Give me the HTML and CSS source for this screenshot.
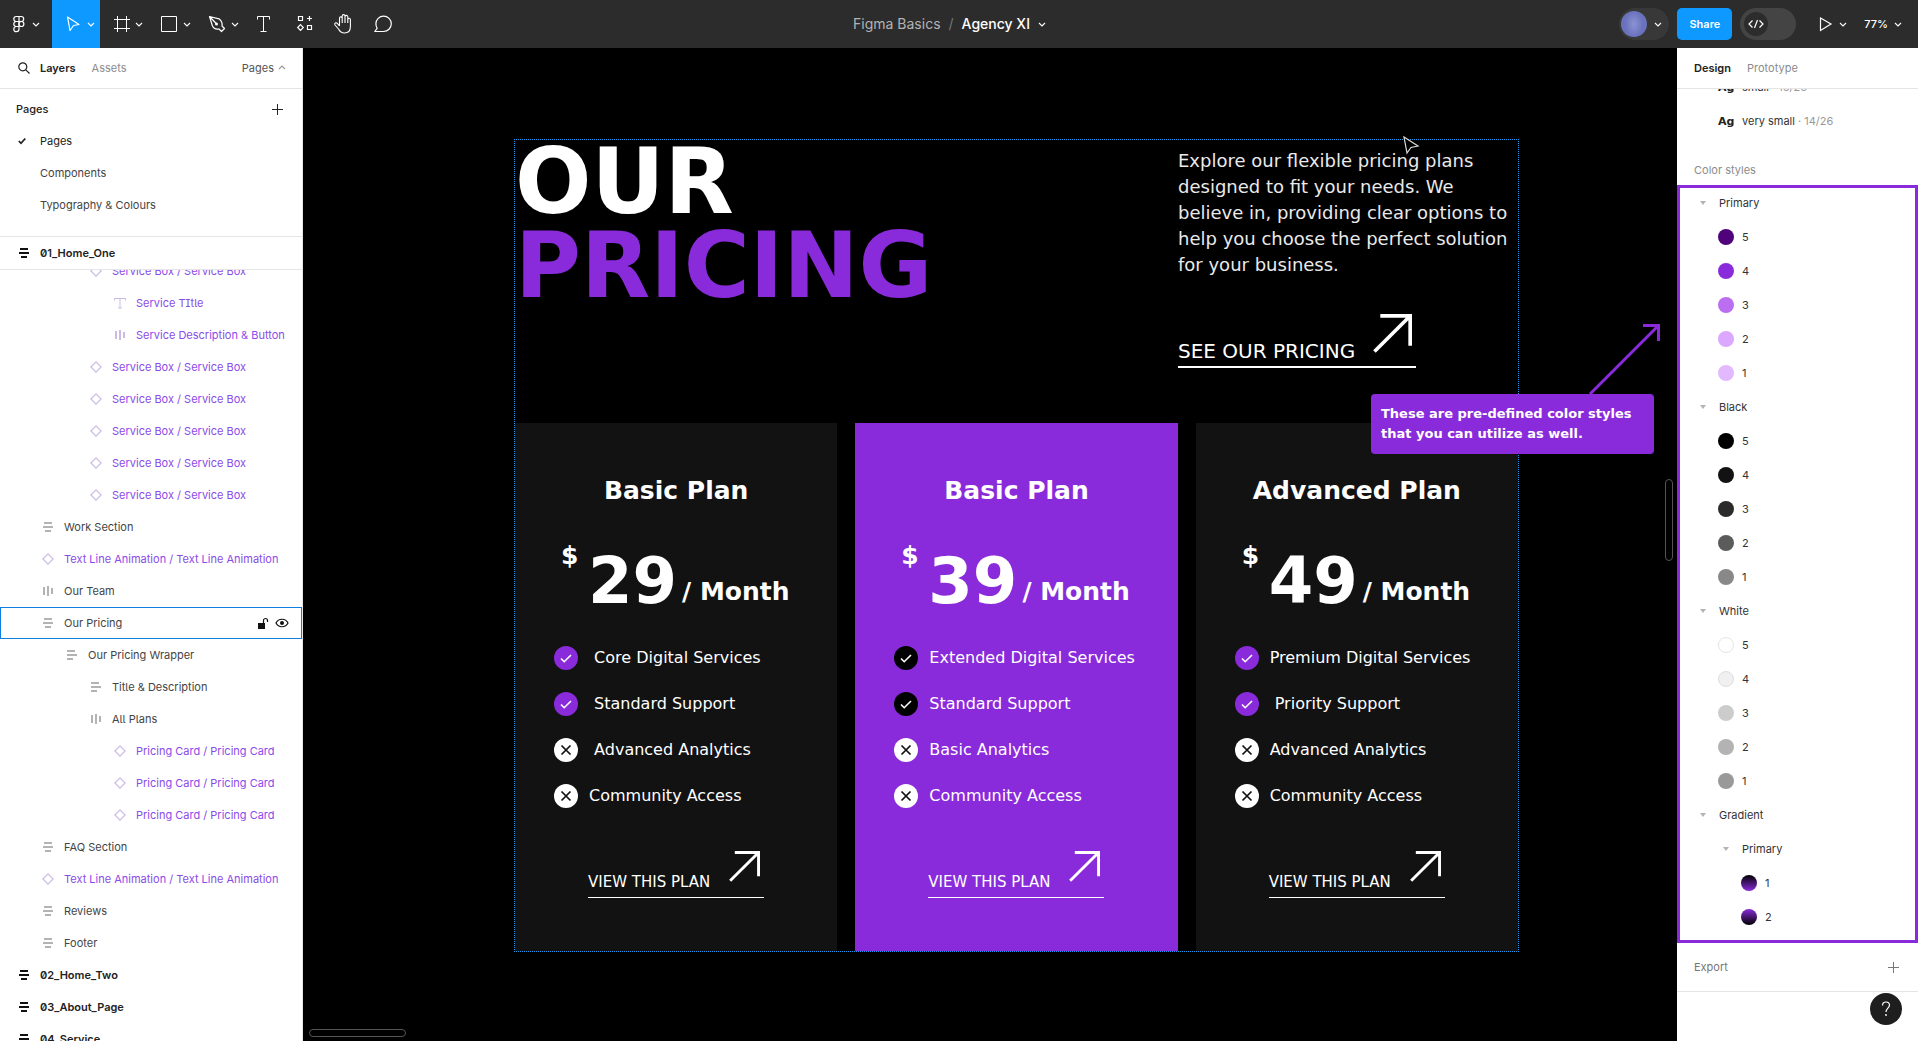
FILE: index.html
```html
<!DOCTYPE html>
<html lang="en">
<head>
<meta charset="utf-8">
<meta name="viewport" content="width=device-width, initial-scale=1">
<title>Agency XI</title>
<link rel="stylesheet" href="styles.css">
</head>
<body>
<svg class="sprite" aria-hidden="true">
  <symbol id="chev" viewBox="0 0 10 10"><path d="M2 4l3 3 3-3" fill="none" stroke="currentColor" stroke-width="1.1"/></symbol>
  <symbol id="plus" viewBox="0 0 12 12"><path d="M6.5 1v11M1 6.5h11" fill="none" stroke="currentColor"/></symbol>
  <symbol id="l-mid" viewBox="0 0 12 12"><path d="M2 2h8M1 6h10M3 10h6" fill="none" stroke="currentColor" stroke-width="2"/></symbol>
  <symbol id="l-left" viewBox="0 0 12 12"><path d="M1 2h8M1 6h10M1 10h6" fill="none" stroke="currentColor" stroke-width="2"/></symbol>
  <symbol id="l-cols" viewBox="0 0 12 12"><path d="M2 2v8M6 1v10M10 3v6" fill="none" stroke="currentColor" stroke-width="2"/></symbol>
  <symbol id="l-dia" viewBox="0 0 12 12"><path d="M6 .9L11.1 6 6 11.1.9 6z" fill="none" stroke="currentColor" stroke-width="1.2"/></symbol>
  <symbol id="l-text" viewBox="0 0 12 12"><path d="M.5 3.500V1.500h11v2M6 1.500v9.500M4 11h4" fill="none" stroke="currentColor"/></symbol>
  <symbol id="caret" viewBox="0 0 6 4"><path d="M0 0h6L3 4z" fill="currentColor"/></symbol>
  <symbol id="yes" viewBox="0 0 24 24"><circle cx="12" cy="12" r="12" fill="currentColor"/><path d="M7 12.500l3.200 3.200L17 9" fill="none" stroke="#fff" stroke-width="1.600"/></symbol>
  <symbol id="no" viewBox="0 0 24 24"><circle cx="12" cy="12" r="12" fill="#fff"/><path d="M7.500 7.500l9 9M16.500 7.500l-9 9" fill="none" stroke="#111" stroke-width="1.700"/></symbol>
  <symbol id="arrow" viewBox="0 0 32 32"><path d="M6 1.500h24.500V26M30 2L1.200 30.800" fill="none" stroke="currentColor" stroke-width="3"/></symbol>
</svg>

<header class="toolbar">
  <div class="tools">
    <button class="tool main" aria-label="Main menu"><svg class="i24" viewBox="0 0 24 24"><g fill="none" stroke="currentColor" stroke-width="1.200"><path d="M12 4.500H9.300a2.500 2.500 0 0 0 0 5H12zM12 4.500h2.200a2.500 2.500 0 0 1 0 5H12zM12 9.500H9.300a2.500 2.500 0 0 0 0 5H12zM12 14.500H9.300a2.600 2.600 0 1 0 2.700 2.600z"/><circle cx="14.400" cy="12" r="2.500"/></g></svg><svg class="i10"><use href="#chev"/></svg></button>
    <button class="tool active" aria-label="Move"><svg class="i24" viewBox="0 0 24 24"><path d="M5.500 5l11.500 7.500-5.500 1L8 18.500z" fill="none" stroke="currentColor" stroke-width="1.200" stroke-linejoin="round"/></svg><svg class="i10"><use href="#chev"/></svg></button>
    <button class="tool" aria-label="Frame"><svg class="i24" viewBox="0 0 24 24"><path d="M7.500 4v16M16.500 4v16M4 7.500h16M4 16.500h16" fill="none" stroke="currentColor"/></svg><svg class="i10"><use href="#chev"/></svg></button>
    <button class="tool" aria-label="Rectangle"><svg class="i24" viewBox="0 0 24 24"><path d="M3.500 4.500h15v15h-15z" fill="none" stroke="currentColor"/></svg><svg class="i10"><use href="#chev"/></svg></button>
    <button class="tool" aria-label="Pen"><svg class="i24" viewBox="0 0 24 24"><path d="M3.500 4.500l9.500 2.300c2.500 2 3.500 5 3 7.200l2.500 2.500-3 3-2.500-2.500c-3 .5-5.700-1-6.700-3.500zM3.500 4.500l6.700 7" fill="none" stroke="currentColor" stroke-width="1.200" stroke-linejoin="round"/><circle cx="10.500" cy="12" r="1.500" fill="currentColor"/></svg><svg class="i10"><use href="#chev"/></svg></button>
    <button class="tool single" aria-label="Text"><svg class="i24" viewBox="0 0 24 24"><path d="M5.500 7.500v-3h12v3M11.500 4.500v15M8.500 19.500h6" fill="none" stroke="currentColor"/></svg></button>
    <button class="tool single" aria-label="Resources"><svg class="i24" viewBox="0 0 24 24"><path d="M6.500 4.500h4v4h-4zM15.500 13.500h4v4h-4zM17.500 4v5M15 6.500h5M8.500 12.700l2.800 2.800-2.800 2.800-2.800-2.800z" fill="none" stroke="currentColor" stroke-width="1.200"/></svg></button>
    <button class="tool single" aria-label="Hand"><svg class="i24" viewBox="0 0 24 24"><path d="M7.500 14V6.200a1.300 1.300 0 0 1 2.700 0V11M10.200 11V4a1.400 1.400 0 0 1 2.800 0v7M13 11V4.800a1.400 1.400 0 0 1 2.800 0V11M15.800 11V7.500a1.300 1.300 0 0 1 2.600 0v7c0 4-2.200 6.500-5.900 6.500-3 0-4.500-1-6-4L3 13c-1-1.800 1-3 2.300-1.600L7.500 14" fill="none" stroke="currentColor" stroke-width="1.100" stroke-linejoin="round"/></svg></button>
    <button class="tool single" aria-label="Comment"><svg class="i24" viewBox="0 0 24 24"><path d="M2.800 19.500h8.800a7.700 7.700 0 1 0-7.700-7.700c0 1.700.5 3.200 1.200 4.500z" fill="none" stroke="currentColor" stroke-width="1.200" stroke-linejoin="round"/></svg></button>
  </div>
  <div class="crumbs"><a href="#">Figma Basics</a><span class="slash">/</span><button class="file">Agency XI<svg class="i10"><use href="#chev"/></svg></button></div>
  <div class="actions">
    <button class="user" aria-label="Account"><span class="avatar"></span><svg class="i10"><use href="#chev"/></svg></button>
    <button class="share">Share</button>
    <label class="devmode"><input type="checkbox" aria-label="Dev mode"><span class="knob"><svg class="i16" viewBox="0 0 16 16"><path d="M4.500 4.500L1 8l3.500 3.500M11.500 4.500L15 8l-3.500 3.500M9.500 4l-3 8" fill="none" stroke="currentColor" stroke-width="1.200"/></svg></span></label>
    <button class="play" aria-label="Present"><svg class="i16" viewBox="0 0 16 16"><path d="M2.500 2L13 8 2.500 14.500z" fill="none" stroke="currentColor" stroke-width="1.200"/></svg><svg class="i10"><use href="#chev"/></svg></button>
    <button class="zoom">77%<svg class="i10"><use href="#chev"/></svg></button>
  </div>
</header>

<div class="workspace">
  <aside class="left">
    <div class="tabs">
      <button class="find" aria-label="Search"><svg class="i12" viewBox="0 0 12 12"><circle cx="4.800" cy="4.800" r="4" fill="none" stroke="currentColor" stroke-width="1.200"/><path d="M7.800 7.800l3.700 3.700" stroke="currentColor" stroke-width="1.200"/></svg></button>
      <button class="tab on">Layers</button><button class="tab">Assets</button>
      <button class="pages-toggle">Pages<svg class="i10 up"><use href="#chev"/></svg></button>
    </div>
    <section class="pages">
      <div class="pages-head"><h2>Pages</h2><button aria-label="Add page"><svg class="i12"><use href="#plus"/></svg></button></div>
      <ul>
        <li class="on"><svg class="tick" viewBox="0 0 8 8"><path d="M.8 4l2.200 2.300L7.300 1.500" fill="none" stroke="currentColor" stroke-width="1.800"/></svg>Pages</li>
        <li>Components</li>
        <li>Typography &amp; Colours</li>
      </ul>
    </section>
    <div class="layer frame-name pinned"><svg><use href="#l-mid"/></svg>01_Home_One</div>
    <div class="layers"><ul>
      <li class="layer d3 comp"><svg><use href="#l-dia"/></svg>Service Box / Service Box</li>
      <li class="layer d4 comp"><svg><use href="#l-text"/></svg>Service TItle</li>
      <li class="layer d4 comp"><svg><use href="#l-cols"/></svg>Service Description &amp; Button</li>
      <li class="layer d3 comp"><svg><use href="#l-dia"/></svg>Service Box / Service Box</li>
      <li class="layer d3 comp"><svg><use href="#l-dia"/></svg>Service Box / Service Box</li>
      <li class="layer d3 comp"><svg><use href="#l-dia"/></svg>Service Box / Service Box</li>
      <li class="layer d3 comp"><svg><use href="#l-dia"/></svg>Service Box / Service Box</li>
      <li class="layer d3 comp"><svg><use href="#l-dia"/></svg>Service Box / Service Box</li>
      <li class="layer d1"><svg><use href="#l-mid"/></svg>Work Section</li>
      <li class="layer d1 comp"><svg><use href="#l-dia"/></svg>Text Line Animation / Text Line Animation</li>
      <li class="layer d1"><svg><use href="#l-cols"/></svg>Our Team</li>
      <li class="layer d1 hover"><svg><use href="#l-mid"/></svg>Our Pricing
        <span class="row-tools">
          <button aria-label="Lock"><svg viewBox="0 0 12 12"><path d="M1 6h7v6H1z" fill="currentColor"/><path d="M6.500 6V3.500a2 2 0 0 1 4 0V5" fill="none" stroke="currentColor" stroke-width="1.200"/></svg></button>
          <button aria-label="Hide"><svg class="eye" viewBox="0 0 14 12"><path d="M1 6c2.500-5 9.500-5 12 0-2.500 5-9.500 5-12 0z" fill="none" stroke="currentColor" stroke-width="1.200"/><circle cx="7" cy="6" r="2" fill="currentColor"/></svg></button>
        </span></li>
      <li class="layer d2"><svg><use href="#l-left"/></svg>Our Pricing Wrapper</li>
      <li class="layer d3"><svg><use href="#l-left"/></svg>Title &amp; Description</li>
      <li class="layer d3"><svg><use href="#l-cols"/></svg>All Plans</li>
      <li class="layer d4 comp"><svg><use href="#l-dia"/></svg>Pricing Card / Pricing Card</li>
      <li class="layer d4 comp"><svg><use href="#l-dia"/></svg>Pricing Card / Pricing Card</li>
      <li class="layer d4 comp"><svg><use href="#l-dia"/></svg>Pricing Card / Pricing Card</li>
      <li class="layer d1"><svg><use href="#l-mid"/></svg>FAQ Section</li>
      <li class="layer d1 comp"><svg><use href="#l-dia"/></svg>Text Line Animation / Text Line Animation</li>
      <li class="layer d1"><svg><use href="#l-mid"/></svg>Reviews</li>
      <li class="layer d1"><svg><use href="#l-mid"/></svg>Footer</li>
      <li class="layer frame-name"><svg><use href="#l-mid"/></svg>02_Home_Two</li>
      <li class="layer frame-name"><svg><use href="#l-mid"/></svg>03_About_Page</li>
      <li class="layer frame-name"><svg><use href="#l-mid"/></svg>04_Service</li>
    </ul></div>
  </aside>

  <main class="canvas">
    <div class="artboard">
      <div class="intro">
        <h1>OUR<br><span>PRICING</span></h1>
        <div class="about">
          <p>Explore our flexible pricing plans<br>designed to fit your needs. We<br>believe in, providing clear options to<br>help you choose the perfect solution<br>for your business.</p>
          <a class="cta big" href="#">SEE OUR PRICING<svg><use href="#arrow"/></svg></a>
        </div>
      </div>
      <div class="plans">
        <article class="plan">
          <h2>Basic Plan</h2>
          <div class="price"><span class="cur">$</span><span class="num">29</span><span class="per">/ Month</span></div>
          <ul>
            <li><svg><use href="#yes"/></svg>&nbsp;Core Digital Services</li>
            <li><svg><use href="#yes"/></svg>&nbsp;Standard Support</li>
            <li><svg><use href="#no"/></svg>&nbsp;Advanced Analytics</li>
            <li><svg><use href="#no"/></svg>Community Access</li>
          </ul>
          <a class="cta" href="#">VIEW THIS PLAN<svg><use href="#arrow"/></svg></a>
        </article>
        <article class="plan featured">
          <h2>Basic Plan</h2>
          <div class="price"><span class="cur">$</span><span class="num">39</span><span class="per">/ Month</span></div>
          <ul>
            <li><svg><use href="#yes"/></svg>Extended Digital Services</li>
            <li><svg><use href="#yes"/></svg>Standard Support</li>
            <li><svg><use href="#no"/></svg>Basic Analytics</li>
            <li><svg><use href="#no"/></svg>Community Access</li>
          </ul>
          <a class="cta" href="#">VIEW THIS PLAN<svg><use href="#arrow"/></svg></a>
        </article>
        <article class="plan">
          <h2>Advanced Plan</h2>
          <div class="price"><span class="cur">$</span><span class="num">49</span><span class="per">/ Month</span></div>
          <ul>
            <li><svg><use href="#yes"/></svg>Premium Digital Services</li>
            <li><svg><use href="#yes"/></svg>&nbsp;Priority Support</li>
            <li><svg><use href="#no"/></svg>Advanced Analytics</li>
            <li><svg><use href="#no"/></svg>Community Access</li>
          </ul>
          <a class="cta" href="#">VIEW THIS PLAN<svg><use href="#arrow"/></svg></a>
        </article>
      </div>
    </div>
    <svg class="pointer" viewBox="0 0 18 20"><path d="M2 2l14 9-7 1.500L5 18z" fill="#000" stroke="#ddd" stroke-width="1.200"/></svg>
    <svg class="note-arrow" viewBox="0 0 72 72"><path d="M54 2.500h15.500V18M69 3L1 71" fill="none" stroke="currentColor" stroke-width="3"/></svg>
    <p class="note">These are pre-defined color styles<br>that you can utilize as well.</p>
    <span class="bar-x"></span><span class="bar-y"></span>
  </main>

  <aside class="right">
    <div class="tabs"><button class="tab on">Design</button><button class="tab">Prototype</button></div>
    <div class="props">
      <ul class="texts">
        <li><b>Ag</b>small <span>· 16/26</span></li>
        <li><b>Ag</b>very small <span>· 14/26</span></li>
      </ul>
      <h3>Color styles</h3>
      <ul class="colors">
        <li class="group"><svg><use href="#caret"/></svg>Primary</li>
        <li><i class="p5"></i>5</li><li><i class="p4"></i>4</li><li><i class="p3"></i>3</li><li><i class="p2"></i>2</li><li><i class="p1"></i>1</li>
        <li class="group"><svg><use href="#caret"/></svg>Black</li>
        <li><i class="b5"></i>5</li><li><i class="b4"></i>4</li><li><i class="b3"></i>3</li><li><i class="b2"></i>2</li><li><i class="b1"></i>1</li>
        <li class="group"><svg><use href="#caret"/></svg>White</li>
        <li><i class="w5"></i>5</li><li><i class="w4"></i>4</li><li><i class="w3"></i>3</li><li><i class="w2"></i>2</li><li><i class="w1"></i>1</li>
        <li class="group"><svg><use href="#caret"/></svg>Gradient</li>
        <li class="group sub"><svg><use href="#caret"/></svg>Primary</li>
        <li class="sub"><i class="g1"></i>1</li><li class="sub"><i class="g2"></i>2</li>
      </ul>
      <div class="export"><span>Export</span><button aria-label="Add export"><svg class="i12"><use href="#plus"/></svg></button></div>
    </div>
    <button class="help" aria-label="Help"><svg viewBox="0 0 16 20"><path d="M4.500 6.500C4.500 4 6 3 8 3s3.500 1.200 3.500 3.300C11.500 9 8 9.500 8 13" fill="none" stroke="currentColor" stroke-width="1.200"/><circle cx="8" cy="16" r="0.900" fill="currentColor"/></svg></button>
  </aside>
</div>
</body>
</html>
```
FILE: styles.css
```css
* { box-sizing: border-box; }
html, body { height: 100%; margin: 0; }
body {
  display: flex;
  flex-direction: column;
  overflow: hidden;
  background: #fff;
  color: #333;
  font: 11px/16px Inter, "Liberation Sans", sans-serif;
}
h1, h2, h3, p, ul { margin: 0; padding: 0; font-size: inherit; }
ul { list-style: none; }
a { color: inherit; text-decoration: none; }
button { border: 0; padding: 0; background: none; color: inherit; font: inherit; display: flex; align-items: center; }
svg { display: block; flex: none; }
.sprite { position: absolute; width: 0; height: 0; }
.i24 { width: 24px; height: 24px; }
.i16 { width: 16px; height: 16px; }
.i12 { width: 12px; height: 12px; }
.i10 { width: 10px; height: 10px; }

/* Toolbar */
.toolbar {
  flex: none;
  display: grid;
  grid-template-columns: 1fr auto 1fr;
  align-items: center;
  height: 48px;
  background: #2c2c2c;
  color: #fff;
}
.tools { display: flex; }
.tool { width: 48px; height: 48px; padding-left: 10px; }
.tool.main { width: 52px; padding-left: 7px; }
.tool.single { width: 40px; padding-left: 8px; }
.tool.active { background: #0d99ff; }
.crumbs { display: flex; align-items: center; gap: 8px; padding-right: 18px; font-size: 14px; color: #b3b3b3; }
.slash { color: #777; }
.file { gap: 7px; color: #fff; font-weight: 500; }
.actions { display: flex; align-items: center; justify-content: flex-end; gap: 8px; padding-right: 15px; font-weight: 600; }
.user { gap: 6px; width: 50px; height: 32px; padding-left: 2px; border-radius: 16px; background: #383838; }
.avatar { width: 26px; height: 26px; border-radius: 50%; background: radial-gradient(ellipse 9px 13px, #8b93d4, #6b72bd); }
.share { height: 32px; padding: 0 12px; border-radius: 5px; background: #0d99ff; }
.devmode { display: flex; align-items: center; width: 56px; height: 32px; padding: 4px; border-radius: 16px; background: #444; }
.devmode input { position: absolute; opacity: 0; }
.knob { display: grid; place-items: center; width: 24px; height: 24px; border-radius: 50%; background: #2c2c2c; }
.play { gap: 4px; padding: 0 8px 0 14px; }
.zoom { gap: 5px; font-weight: 500; }

.workspace { flex: 1; min-height: 0; display: flex; }

/* Side panels */
.left, .right { flex: none; display: flex; flex-direction: column; background: #fff; overflow: hidden; }
.left { width: 303px; border-right: 1px solid #e5e5e5; }
.right { position: relative; width: 241px; }
.tabs { flex: none; display: flex; align-items: center; gap: 16px; height: 41px; padding: 0 15px 0 16px; border-bottom: 1px solid #e5e5e5; color: #8c8c8c; }
.right .tabs { padding-left: 17px; }
.tab.on { color: #222; font-weight: 600; }
.find { width: 8px; padding-left: 2px; color: #222; }
.pages-toggle { margin-left: auto; gap: 3px; color: #555; }
.up { transform: rotate(180deg); color: #999; }
.pages { flex: none; padding: 4px 0 15px; border-bottom: 1px solid #e5e5e5; }
.pages-head { display: flex; align-items: center; justify-content: space-between; height: 32px; padding: 0 19px 0 16px; color: #222; }
.pages-head h2 { font-weight: 500; }
.pages li { display: flex; align-items: center; height: 32px; padding-left: 40px; color: #444; }
.pages li.on { padding-left: 18px; gap: 14px; color: #222; }
.tick { width: 8px; height: 8px; }
.layer { flex: none; display: flex; align-items: center; gap: 10px; height: 32px; padding: 0 13px 0 18px; color: #444; white-space: nowrap; font-feature-settings: "ss02"; }
.layer > svg { width: 12px; height: 12px; color: #b3b3b3; }
.layer.frame-name { color: #222; font-weight: 600; }
.layer.frame-name > svg { color: #111; }
.layer.pinned { height: 33px; border-bottom: 1px solid #e5e5e5; }
.layers { flex: 1; min-height: 0; overflow: hidden; }
.layers ul { margin-top: -15px; }
.layer.d1 { padding-left: 42px; }
.layer.d2 { padding-left: 66px; }
.layer.d3 { padding-left: 90px; }
.layer.d4 { padding-left: 114px; }
.layer.comp { color: #8a4be8; }
.layer.comp > svg { color: #cbbbe4; }
.layer.hover { box-shadow: inset 0 0 0 1px #0d7fe0; }
.row-tools { display: flex; gap: 6px; margin-left: auto; color: #111; }
.row-tools svg { width: 12px; height: 12px; }
.row-tools .eye { width: 14px; }

/* Canvas */
.canvas {
  position: relative;
  flex: 1;
  min-width: 0;
  padding: 91px 158px 0 211px;
  overflow: hidden;
  background: #000;
  color: #fff;
  font-family: "DejaVu Sans", sans-serif;
}
.artboard { border: 1px dotted #1c9cf5; }
.intro { display: flex; justify-content: space-between; height: 283px; }
h1 { font-size: 90px; line-height: 84px; font-weight: 700; }
h1 span { color: #8a2bdb; }
.about { display: flex; flex-direction: column; align-items: flex-start; flex: none; width: 340px; padding-top: 8px; }
.about p { font-size: 18px; line-height: 26px; color: #eaeaea; white-space: nowrap; }
.cta { display: flex; align-items: flex-end; justify-content: space-between; width: 176px; height: 47px; padding: 0 4px 5px 0; border-bottom: 1px solid #fff; font-size: 15px; line-height: 20px; white-space: nowrap; }
.cta svg { align-self: flex-start; width: 31px; height: 31px; }
.cta.big { width: 238px; height: 54px; margin-top: 36px; border-bottom-width: 2px; font-size: 20px; }
.cta.big svg { width: 39px; height: 39px; }
.plans { display: grid; grid-template-columns: repeat(3, 1fr); gap: 18px; }
.plan { padding: 52px 0 53px 39px; background: #121212; }
.plan.featured { background: #8a2bdb; }
.plan h2 { margin: 0 39px 37px 0; font-size: 25px; line-height: 32px; text-align: center; }
.price { display: flex; align-items: flex-end; height: 69px; padding-left: 7px; font-weight: 700; }
.cur { align-self: flex-start; width: 27px; font-size: 25px; line-height: 24px; }
.num { font-size: 64px; line-height: 64px; }
.per { margin-left: 5px; font-size: 25px; line-height: 42px; }
.plan ul { display: grid; gap: 22px; margin: 33px 0 43px; }
.plan li { display: flex; align-items: center; gap: 11px; height: 24px; font-size: 16px; }
.plan li svg { width: 24px; height: 24px; color: #8a2bdb; }
.plan.featured li svg { color: #000; }
.plan .cta { margin-left: 34px; }
.pointer { position: absolute; left: 1099px; top: 87px; width: 18px; height: 20px; }
.note-arrow { position: absolute; right: 16px; top: 275px; width: 72px; height: 72px; color: #8a2bdb; }
.note { position: absolute; right: 23px; top: 346px; width: 283px; padding: 10px; border-radius: 4px; background: #8a2bdb; font-size: 13px; line-height: 20px; font-weight: 700; white-space: nowrap; }
.bar-x, .bar-y { position: absolute; border: 1px solid #555; border-radius: 5px; }
.bar-x { left: 6px; bottom: 4px; width: 97px; height: 8px; }
.bar-y { right: 4px; top: 431px; width: 8px; height: 82px; }

/* Design panel */
.props { flex: 1; min-height: 0; overflow: hidden; }
.texts { margin-top: -19px; }
.texts li { display: flex; align-items: center; height: 34px; padding-left: 41px; white-space: pre; }
.texts span { color: #999; }
.texts b { width: 24px; color: #222; font: 700 11px "DejaVu Sans", sans-serif; }
.props h3 { margin-top: 15px; padding: 9px 17px 7px; color: #8c8c8c; font-weight: 400; }
.colors { padding: 1px 0 9px; position: relative; }
.colors::after { content: ""; position: absolute; inset: 0; border: 3px solid #8a2bdb; }
.colors li { display: flex; align-items: center; gap: 8px; height: 34px; padding-left: 41px; }
.colors li.sub { padding-left: 64px; }
.colors li.group { gap: 13px; padding-left: 23px; }
.colors li.group.sub { padding-left: 46px; }
.colors svg { width: 6px; height: 4px; color: #b3b3b3; }
.colors i { width: 16px; height: 16px; border-radius: 50%; }
.p5 { background: #4f0279; } .p4 { background: #8a2bdb; } .p3 { background: #bc6ef0; } .p2 { background: #dca8ff; } .p1 { background: #e2b8ff; }
.b5 { background: #000; } .b4 { background: #121212; } .b3 { background: #2b2b2b; } .b2 { background: #5b5b5b; } .b1 { background: #888; }
.w5 { background: #fff; border: 1px solid #e5e5e5; } .w4 { background: #f0f0f0; border: 1px solid #ddd; } .w3 { background: #ccc; } .w2 { background: #b3b3b3; } .w1 { background: #999; }
.g1 { background: linear-gradient(#000, #8a2bdb); } .g2 { background: linear-gradient(#8a2bdb, #000); }
.export { display: flex; align-items: center; justify-content: space-between; height: 49px; padding: 0 19px 0 17px; border-bottom: 1px solid #e5e5e5; color: #777; }
.help { position: absolute; right: 16px; bottom: 16px; justify-content: center; width: 32px; height: 32px; border-radius: 50%; background: #1e1e1e; color: #fff; }
.help svg { width: 16px; height: 20px; }
```
